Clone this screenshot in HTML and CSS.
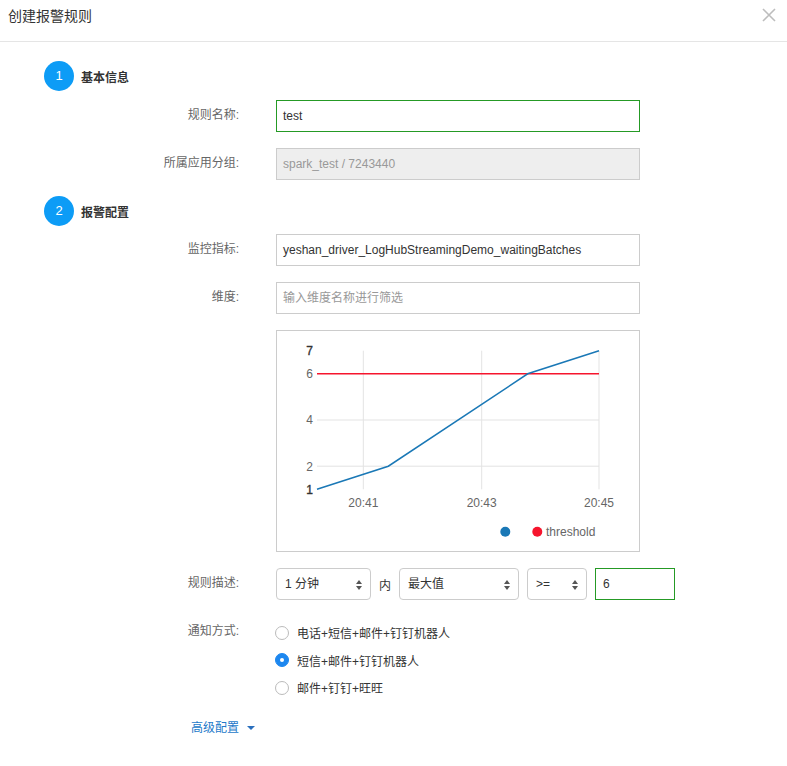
FILE: index.html
```html
<!DOCTYPE html>
<html lang="zh-CN">
<head>
<meta charset="utf-8">
<title>创建报警规则</title>
<link rel="stylesheet" href="styles.css">
</head>
<body>
<div class="dialog">
  <div class="header">
    <div class="title">创建报警规则</div>
    <svg class="close" width="14" height="14" viewBox="0 0 14 14"><path d="M1 1L13 13M13 1L1 13" stroke="#bdbdbd" stroke-width="1.6" fill="none"/></svg>
  </div>
  <div class="main">
    <div class="step first"><span class="num">1</span><span class="step-label">基本信息</span></div>
    <div class="row">
      <div class="label">规则名称:</div>
      <div class="input active">test</div>
    </div>
    <div class="row">
      <div class="label">所属应用分组:</div>
      <div class="input disabled">spark_test / 7243440</div>
    </div>
    <div class="step"><span class="num">2</span><span class="step-label">报警配置</span></div>
    <div class="row">
      <div class="label">监控指标:</div>
      <div class="input">yeshan_driver_LogHubStreamingDemo_waitingBatches</div>
    </div>
    <div class="row">
      <div class="label">维度:</div>
      <div class="input placeholder">输入维度名称进行筛选</div>
    </div>
    <div class="row">
      <div class="label"></div>
      <div class="chart">
        <svg width="362" height="220" viewBox="0 0 362 220">
          <g stroke="#e3e3e3" stroke-width="1">
            <line x1="86.3" y1="19.7" x2="86.3" y2="158.3"/>
            <line x1="204.7" y1="19.7" x2="204.7" y2="158.3"/>
            <line x1="322" y1="19.7" x2="322" y2="158.3"/>
            <line x1="40" y1="89" x2="322" y2="89"/>
            <line x1="40" y1="135.2" x2="322" y2="135.2"/>
          </g>
          <line x1="40" y1="42.8" x2="322" y2="42.8" stroke="#f6152d" stroke-width="1.5"/>
          <polyline points="40,158.3 111.3,135.2 250.7,42.8 322,19.7" fill="none" stroke="#1a78b6" stroke-width="1.5"/>
          <g class="axis" text-anchor="end">
            <text x="36" y="24" class="dark">7</text>
            <text x="36" y="47">6</text>
            <text x="36" y="93">4</text>
            <text x="36" y="139.5">2</text>
            <text x="36" y="162.5" class="dark">1</text>
          </g>
          <g class="axis" text-anchor="middle">
            <text x="86.3" y="175.5">20:41</text>
            <text x="204.7" y="175.5">20:43</text>
            <text x="322" y="175.5">20:45</text>
          </g>
          <circle cx="228.3" cy="200.7" r="5" fill="#1a78b6"/>
          <circle cx="260.3" cy="200.7" r="5" fill="#f6152d"/>
          <text x="269" y="205" class="axis">threshold</text>
        </svg>
      </div>
    </div>
    <div class="row">
      <div class="label">规则描述:</div>
      <div class="rule">
        <div class="select w1">1 分钟<span class="arrows"><i class="up"></i><i class="down"></i></span></div>
        <span class="in">内</span>
        <div class="select w2">最大值<span class="arrows"><i class="up"></i><i class="down"></i></span></div>
        <div class="select w3">&gt;=<span class="arrows"><i class="up"></i><i class="down"></i></span></div>
        <div class="input active w4">6</div>
      </div>
    </div>
    <div class="row notify">
      <div class="label">通知方式:</div>
      <div class="radios">
        <div class="radio"><span class="dot"></span>电话+短信+邮件+钉钉机器人</div>
        <div class="radio checked"><span class="dot"></span>短信+邮件+钉钉机器人</div>
        <div class="radio"><span class="dot"></span>邮件+钉钉+旺旺</div>
      </div>
    </div>
    <div class="advanced">高级配置<span class="caret"></span></div>
  </div>
</div>
</body>
</html>
```
FILE: styles.css
```css
* { box-sizing: border-box; }
html, body { margin: 0; padding: 0; background: #fff; }
body {
  font-family: "Liberation Sans", "Noto Sans CJK SC", sans-serif;
  font-size: 12px;
  color: #333;
  width: 787px;
  height: 766px;
  overflow: hidden;
}
.header {
  height: 42px;
  border-bottom: 1px solid #e5e5e5;
  display: flex;
  justify-content: space-between;
  align-items: flex-start;
  padding: 8px 11px 0 8px;
}
.title { font-size: 14px; line-height: 16px; color: #333; }
.close { display: block; }
.main { padding: 19px 0 0 44px; }
.step { display: flex; align-items: center; height: 30px; margin-top: 16px; margin-bottom: 8px; }
.step.first { margin-top: 0; margin-bottom: 9px; }
.num {
  width: 30px; height: 30px; border-radius: 50%;
  background: #0d9cf6; color: #fff;
  font-size: 13px; line-height: 30px; text-align: center;
}
.step-label { margin-left: 7px; font-weight: bold; font-size: 12px; color: #333; }
.row {
  display: grid;
  grid-template-columns: 195px 364px;
  column-gap: 37px;
  margin-bottom: 16px;
}
.label { text-align: right; line-height: 31px; color: #666; font-size: 12px; }
.input {
  height: 32px;
  border: 1px solid #ccc;
  padding: 0 6px;
  line-height: 30px;
  color: #333;
  white-space: nowrap;
  overflow: hidden;
}
.input.active { border-color: #259a25; }
.input.disabled { background: #eee; color: #999; }
.input.placeholder { color: #999; }
.chart { border: 1px solid #ccc; height: 222px; }
.chart svg { display: block; }
.axis { font-family: "Liberation Sans", sans-serif; font-size: 12px; fill: #666; }
.axis .dark, .dark { fill: #333; stroke: #333; stroke-width: 0.35; }
.rule { display: flex; align-items: center; gap: 8px; width: 420px; }
.select {
  position: relative;
  height: 32px;
  border: 1px solid #ccc;
  border-radius: 4px;
  padding: 0 0 0 8px;
  line-height: 30px;
  color: #333;
}
.w1 { width: 95px; }
.w2 { width: 120px; }
.w3 { width: 60px; }
.w4 { width: 80px; padding-left: 7px; }
.in { color: #333; }
.arrows {
  position: absolute;
  right: 8px; top: 11px;
  display: flex; flex-direction: column; gap: 2px;
}
.arrows i { display: block; width: 0; height: 0; border-left: 3px solid transparent; border-right: 3px solid transparent; }
.arrows .up { border-bottom: 4px solid #555; }
.arrows .down { border-top: 4px solid #555; }
.notify .label { line-height: 30px; }
.radios { padding-top: 3px; }
.radio { display: flex; align-items: center; height: 27.5px; color: #333; margin-left: -1px; }
.dot {
  width: 14px; height: 14px; border-radius: 50%;
  border: 1px solid #bbb; background: #fff;
  margin-right: 8px; position: relative;
}
.radio.checked .dot { background: #1d87ef; border-color: #1d87ef; }
.radio.checked .dot::after {
  content: ""; position: absolute; left: 4px; top: 4px;
  width: 4px; height: 4px; border-radius: 50%; background: #fff;
}
.advanced {
  margin: 1px 0 0 147px;
  line-height: 20px;
  color: #2479c9;
  display: flex; align-items: center;
}
.caret {
  margin-left: 8px;
  width: 0; height: 0;
  border-left: 4px solid transparent; border-right: 4px solid transparent;
  border-top: 4px solid #2a6fbd;
}
```
